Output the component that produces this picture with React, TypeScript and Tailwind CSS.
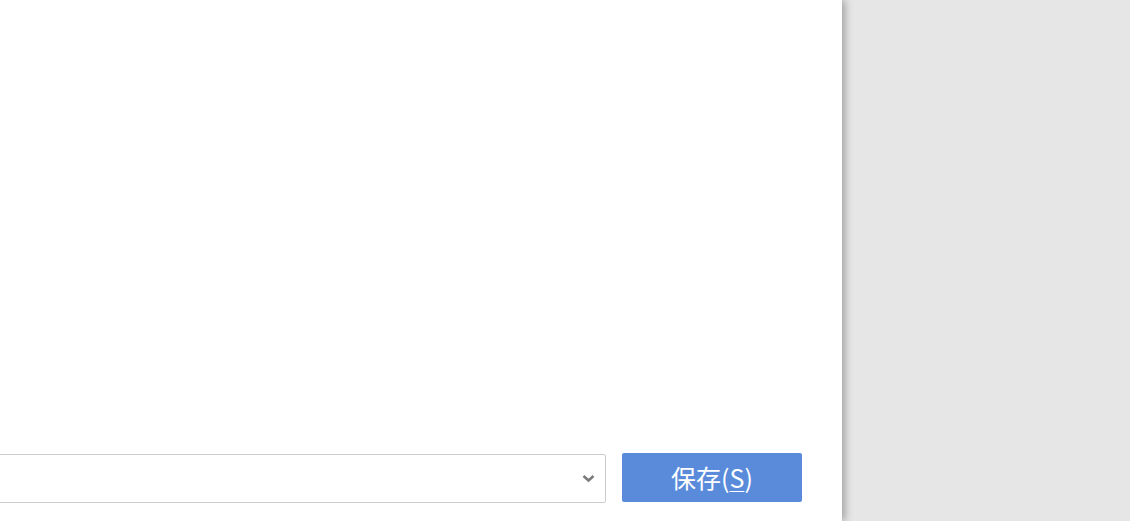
import React from "react";

export default function App() {
  return (
    <div className="w-[1130px] h-[521px] bg-[#e6e6e6] overflow-hidden flex" style={{ fontFamily: '"Noto Sans CJK SC", "Noto Sans", sans-serif' }}>
      <div className="w-[842px] h-full bg-white shadow-[3px_0_8px_rgba(0,0,0,0.3)] overflow-hidden flex flex-col relative z-10">
        <div className="flex-1" />
        <div className="flex items-start gap-[16px] pr-[40px] pb-[18px]">
          <div className="-ml-[20px] mt-[1px] w-[626px] h-[49px] border border-[#cccccc] rounded-[2px] bg-white flex items-center justify-end pr-[10px]">
            <svg width="13" height="9" viewBox="0 0 13 9">
              <path d="M1.5 2 L6.5 6.5 L11.5 2" fill="none" stroke="#7a7a7a" strokeWidth="2.6" />
            </svg>
          </div>
          <button className="w-[180px] h-[49px] bg-[#5a8bdb] rounded-[2px] text-white text-[25px] leading-none flex items-center justify-center">
            保存(<span className="underline underline-offset-[3px] decoration-1">S</span>)
          </button>
        </div>
      </div>
    </div>
  );
}
